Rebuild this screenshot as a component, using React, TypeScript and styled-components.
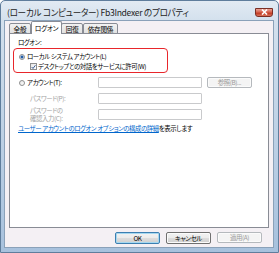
import React from "react";
import styled, { createGlobalStyle } from "styled-components";

const GlobalStyle = createGlobalStyle`
  html, body {
    margin: 0;
    padding: 0;
    background: #ffffff;
  }
  body {
    font-family: "Noto Sans CJK JP", "Noto Sans", sans-serif;
    font-size: 6.4px;
    letter-spacing: -0.4px;
    font-feature-settings: "palt";
  }
`;

export default function App() {
  return (
    <>
      <GlobalStyle />
      <Window>
        <TitleBar>
          <Title>(ローカル コンピューター) Fb3Indexer のプロパティ</Title>
          <CloseButton>
            <svg width="7" height="6" viewBox="0 0 7 6">
              <path d="M1 0.5 L6 5.5 M6 0.5 L1 5.5" stroke="#fff" strokeWidth="1.6" />
            </svg>
          </CloseButton>
        </TitleBar>
        <Client>
          <TabStrip>
            <Tab>全般</Tab>
            <Tab $active>ログオン</Tab>
            <Tab>回復</Tab>
            <Tab>依存関係</Tab>
          </TabStrip>
          <Panel>
            <GroupLabel>ログオン:</GroupLabel>
            <Highlight>
              <OptionRow>
                <Radio $checked />
                <span>ローカル システム アカウント(L)</span>
              </OptionRow>
              <CheckRow>
                <CheckBox>
                  <svg width="6" height="6" viewBox="0 0 6 6">
                    <path d="M0.8 3 L2.4 4.8 L5.3 0.9" stroke="#2a4f8a" strokeWidth="1.1" fill="none" />
                  </svg>
                </CheckBox>
                <span>デスクトップとの対話をサービスに許可(W)</span>
              </CheckRow>
            </Highlight>
            <FieldGrid>
              <OptionRow>
                <Radio />
                <span>アカウント(T):</span>
              </OptionRow>
              <TextBox />
              <PushButton $disabled>参照(B)...</PushButton>
              <FieldLabel>パスワード(P):</FieldLabel>
              <TextBox />
              <span />
              <FieldLabel>
                パスワードの
                <br />
                確認入力(C):
              </FieldLabel>
              <TextBox />
              <span />
            </FieldGrid>
            <InfoLine>
              <Link>ユーザー アカウントのログオン オプションの構成の詳細</Link>を表示します
            </InfoLine>
          </Panel>
          <ButtonRow>
            <PushButton $default>OK</PushButton>
            <PushButton>キャンセル</PushButton>
            <PushButton $disabled>適用(A)</PushButton>
          </ButtonRow>
        </Client>
      </Window>
    </>
  );
}

const Window = styled.div`
  box-sizing: border-box;
  width: 279px;
  height: 253px;
  border: 1px solid #5f7d9c;
  border-radius: 5px 5px 0 0;
  background: linear-gradient(180deg, #e2eaf3 0, #d3e0ed 20px, #a7c1dd 100%);
  padding: 0 4px 4px 3px;
  display: flex;
  flex-direction: column;
`;

const TitleBar = styled.div`
  height: 19px;
  display: flex;
  align-items: center;
  justify-content: space-between;
  padding: 0 0 0 3px;
`;

const Title = styled.div`
  font-size: 8.6px;
  letter-spacing: -0.3px;
  color: #1e1e1e;
  white-space: nowrap;
  margin-top: 2px;
`;

const CloseButton = styled.div`
  box-sizing: border-box;
  width: 18px;
  height: 9px;
  margin-top: 3px;
  margin-right: 1px;
  border: 1px solid #7b2f24;
  border-radius: 0 0 3px 3px;
  background: linear-gradient(180deg, #e9a396 0, #d5604c 45%, #c23b22 60%, #d9745e 100%);
  display: flex;
  align-items: center;
  justify-content: center;
`;

const Client = styled.div`
  flex: 1;
  border: 1px solid #8aa1b9;
  background: #f4f0f4;
  padding: 1px 4px 0 4px;
  display: flex;
  flex-direction: column;
`;

const TabStrip = styled.div`
  display: flex;
  align-items: flex-end;
  height: 12px;
  position: relative;
  z-index: 1;
  margin-bottom: -1px;
`;

const Tab = styled.div<{ $active?: boolean }>`
  box-sizing: border-box;
  height: ${(p) => (p.$active ? "13px" : "11px")};
  padding: 0 ${(p) => (p.$active ? "3px" : "3.5px")};
  margin: ${(p) => (p.$active ? "0 -1px" : "0")};
  border: 1px solid #898c95;
  border-bottom: ${(p) => (p.$active ? "none" : "1px solid #898c95")};
  border-radius: 2px 2px 0 0;
  background: ${(p) => (p.$active ? "#ffffff" : "linear-gradient(180deg, #f2f2f2, #e1e1e1)")};
  display: flex;
  align-items: center;
  font-size: 6.6px;
  letter-spacing: -0.2px;
  color: #000;
  white-space: nowrap;
  & + & {
    margin-left: ${(p) => (p.$active ? "0" : "1px")};
  }
`;

const Panel = styled.div`
  box-sizing: border-box;
  height: 195px;
  border: 1px solid #898c95;
  background: #ffffff;
  padding: 4px 6px 0 3px;
  display: flex;
  flex-direction: column;
`;

const GroupLabel = styled.div`
  height: 10px;
  line-height: 10px;
  padding-left: 5px;
  color: #000;
`;

const Highlight = styled.div`
  box-sizing: border-box;
  width: 155px;
  height: 25px;
  border: 1.5px solid #e8262b;
  border-radius: 4px;
  padding: 3px 0 0 5px;
  display: flex;
  flex-direction: column;
  gap: 1px;
`;

const OptionRow = styled.div`
  display: flex;
  align-items: center;
  gap: 2px;
  height: 9px;
  white-space: nowrap;
  color: #000;
`;

const CheckRow = styled(OptionRow)`
  padding-left: 11px;
  gap: 1px;
`;

const Radio = styled.span<{ $checked?: boolean }>`
  box-sizing: border-box;
  width: 6px;
  height: 6px;
  border-radius: 50%;
  border: 1px solid #8e8f8f;
  background: ${(p) =>
    p.$checked
      ? "radial-gradient(circle, #1b4f91 0, #2c6bb8 1.4px, #e6eef7 1.7px)"
      : "linear-gradient(135deg, #e4e4e4, #ffffff)"};
  flex: none;
`;

const CheckBox = styled.span`
  box-sizing: border-box;
  width: 7px;
  height: 7px;
  border: 1px solid #8e8f8f;
  background: linear-gradient(135deg, #e6e6e6, #ffffff);
  display: flex;
  align-items: center;
  justify-content: center;
  flex: none;
`;

const FieldGrid = styled.div`
  display: grid;
  grid-template-columns: 74px 104px 49px;
  grid-auto-rows: 11px;
  column-gap: 5px;
  row-gap: 5px;
  margin-top: 4px;
  padding-left: 6px;
  align-items: center;
`;

const FieldLabel = styled.div`
  padding-left: 11px;
  color: #a3a3a3;
  line-height: 8px;
  white-space: nowrap;
`;

const TextBox = styled.div`
  box-sizing: border-box;
  height: 11px;
  border: 1px solid #c9cacc;
  border-radius: 1px;
  background: #ffffff;
`;

const PushButton = styled.div<{ $default?: boolean; $disabled?: boolean }>`
  box-sizing: border-box;
  height: ${(p) => (p.$disabled ? "11px" : "12px")};
  width: 45px;
  border: 1px solid ${(p) => (p.$disabled ? "#b5b9bd" : p.$default ? "#3c7fb1" : "#707070")};
  border-radius: 2px;
  background: ${(p) =>
    p.$disabled
      ? "#f4f4f4"
      : "linear-gradient(180deg, #f2f2f2 0, #ebebeb 50%, #dddddd 51%, #cfcfcf 100%)"};
  box-shadow: ${(p) => (p.$default ? "inset 0 0 0 1px #a6d8f0" : "inset 0 0 0 1px #fbfbfb")};
  color: ${(p) => (p.$disabled ? "#9a9a9a" : "#000")};
  display: flex;
  align-items: center;
  justify-content: center;
  white-space: nowrap;
`;

const InfoLine = styled.div`
  margin-top: 4px;
  padding-left: 5px;
  color: #000;
  white-space: nowrap;
`;

const Link = styled.span`
  color: #0066cc;
  text-decoration: underline;
`;

const ButtonRow = styled.div`
  display: flex;
  justify-content: flex-end;
  gap: 6px;
  padding: 4px 7px 0 0;
`;
